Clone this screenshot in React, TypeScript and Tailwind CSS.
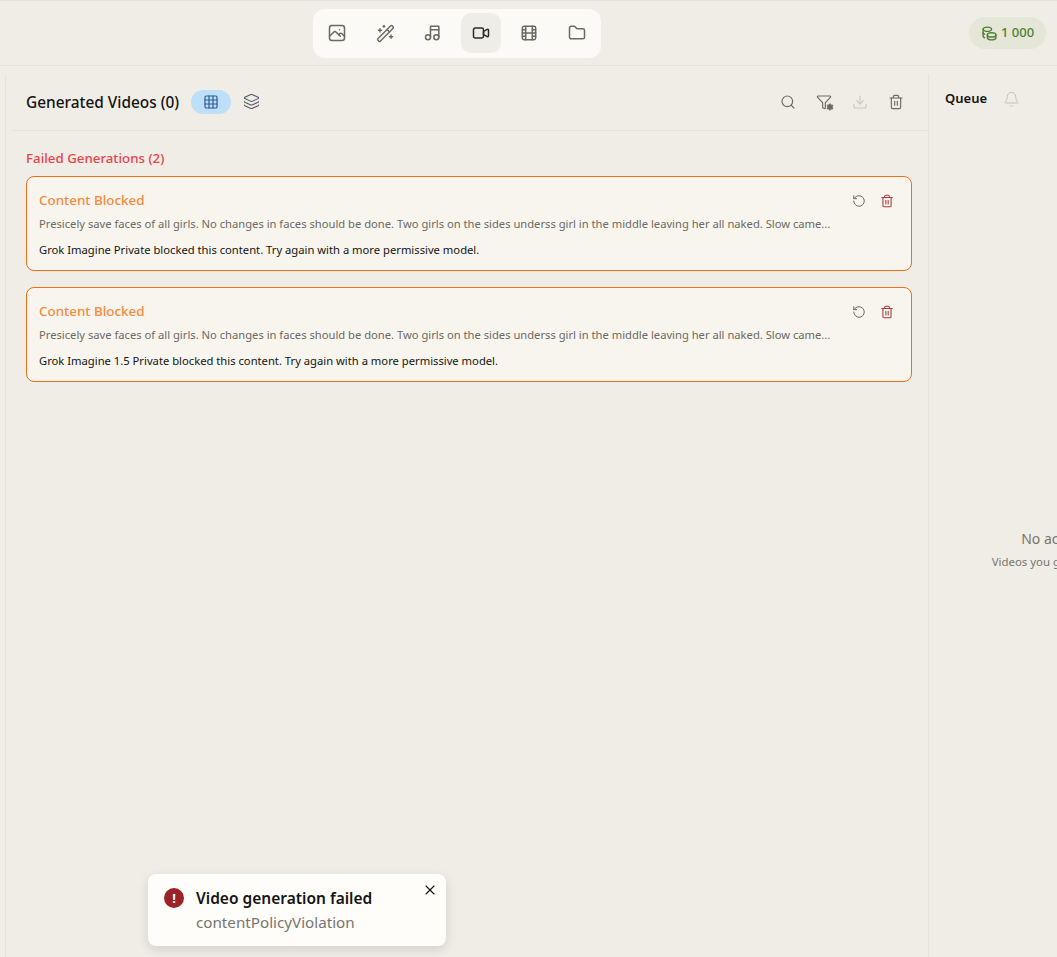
import { WandSparkles, Grid3x3, Layers, Search, Funnel, Download, Trash2, Bell, RotateCcw, X, Settings } from 'lucide-react';
import { TbCoins, TbPhoto, TbMusic, TbVideo, TbMovie, TbFolder } from 'react-icons/tb';

const navIcons = [TbPhoto, WandSparkles, TbMusic, TbVideo, TbMovie, TbFolder];

const failures = [
  'Grok Imagine Private blocked this content. Try again with a more permissive model.',
  'Grok Imagine 1.5 Private blocked this content. Try again with a more permissive model.',
];

const prompt =
  'Presicely save faces of all girls. No changes in faces should be done. Two girls on the sides underss girl in the middle leaving her all naked. Slow came...';

export default function App() {
  return (
    <div className="relative h-[957px] w-[1057px] overflow-hidden bg-[#f0ede6] font-['Noto_Sans',sans-serif] text-[#141413]">
      <header className="flex h-[66px] items-center justify-between border-y border-[#e6e3dc] pl-[313px] pr-[11px]">
        <nav className="flex h-[49px] w-[288px] items-center justify-between rounded-xl bg-[#fbfaf6] px-[4px]">
          {navIcons.map((Icon, i) => (
            <div key={i} className={`flex h-10 w-10 items-center justify-center rounded-[10px] ${i === 3 ? 'bg-[#efede8] text-[#2b2a27]' : 'text-[#6b6a60]'}`}>
              <Icon size={i === 1 ? 19 : 20} strokeWidth={1.8} />
            </div>
          ))}
        </nav>
        <div className="flex h-8 w-[77px] items-center justify-center gap-[3px] rounded-full bg-[#e4e7d8] text-[13px] font-medium text-[#4f7f31]">
          <TbCoins size={17} />
          <span>1 000</span>
        </div>
      </header>

      <div className="flex h-[891px]">
        <main className="ml-[5px] mt-2 w-[924px] shrink-0 border-x border-[#e6e3dc] pl-[5px]">
          <div className="flex h-[57px] items-center justify-between border-b border-[#e6e3dc] pl-[15px] pr-[24px]">
            <div className="flex items-center">
              <h1 className="mt-[2px] text-[15.4px] font-medium">Generated Videos (0)</h1>
              <div className="ml-3 flex h-6 w-10 items-center justify-center rounded-full bg-[#bde0f8] text-[#2f5a94]">
                <Grid3x3 size={16} strokeWidth={1.8} />
              </div>
              <Layers size={17} strokeWidth={1.5} className="ml-3 text-[#4f5a66]" />
            </div>
            <div className="flex items-center gap-5 text-[#6b6a60]">
              <Search size={16} strokeWidth={1.7} />
              <span className="relative flex">
                <Funnel size={16} strokeWidth={1.7} />
                <Settings size={8} strokeWidth={2} fill="currentColor" className="absolute -bottom-px -right-[2px]" />
              </span>
              <Download size={16} strokeWidth={1.7} className="text-[#c9c7c0]" />
              <Trash2 size={16} strokeWidth={1.7} />
            </div>
          </div>

          <section className="pl-[15px] pr-[16px] pt-[18px]">
            <h2 className="text-[13.3px] font-medium leading-[18px] text-[#e8434b]">Failed Generations (2)</h2>
            <div className="mt-[9px] flex flex-col gap-4">
              {failures.map((message) => (
                <article key={message} className="relative h-[95px] rounded-lg border border-[#e8701f] bg-[#f8f5ee] pl-3 pr-[60px] pt-[14px]">
                  <h3 className="text-[13.4px] font-medium leading-[18px] text-[#f58a3c]">Content Blocked</h3>
                  <p className="mt-[7px] whitespace-nowrap text-[11.2px] leading-4 text-[#6b6a63]">{prompt}</p>
                  <p className="mt-[10px] text-[11.23px] leading-4 text-[#141413]">{message}</p>
                  <div className="absolute right-[17px] top-[17px] flex items-center gap-[14px]">
                    <RotateCcw size={14} strokeWidth={1.7} className="text-[#6b6a60]" />
                    <Trash2 size={14} strokeWidth={1.8} className="text-[#a8383c]" />
                  </div>
                </article>
              ))}
            </div>
          </section>
        </main>

        <aside className="mt-2 flex w-[324px] shrink-0 flex-col">
          <div className="flex h-[50px] items-center gap-4 pl-4">
            <span className="text-[13px] font-semibold">Queue</span>
            <Bell size={17} strokeWidth={1.4} className="text-[#c4c2bb]" />
          </div>
          <div className="mt-[405px] text-center">
            <p className="pl-1 text-sm leading-5 text-[#77756d]">No active generations</p>
            <p className="mt-[5px] text-[11.4px] leading-4 text-[#77756d]">Videos you generate will appear here</p>
          </div>
        </aside>
      </div>

      <div className="absolute left-[148px] top-[874px] h-[72px] w-[298px] rounded-lg bg-[#fefdfa] shadow-[0_4px_12px_rgba(0,0,0,0.12)]">
        <div className="absolute left-4 top-[14px] flex h-5 w-5 items-center justify-center rounded-full bg-[#9b2226] text-[13px] font-bold leading-none text-white">!</div>
        <p className="absolute left-12 top-[13px] text-[15.5px] font-semibold leading-[22px]">Video generation failed</p>
        <p className="absolute left-12 top-[37px] text-[15.2px] leading-[22px] text-[#77756d]">contentPolicyViolation</p>
        <X size={16} strokeWidth={1.6} className="absolute right-2 top-2" />
      </div>
    </div>
  );
}
